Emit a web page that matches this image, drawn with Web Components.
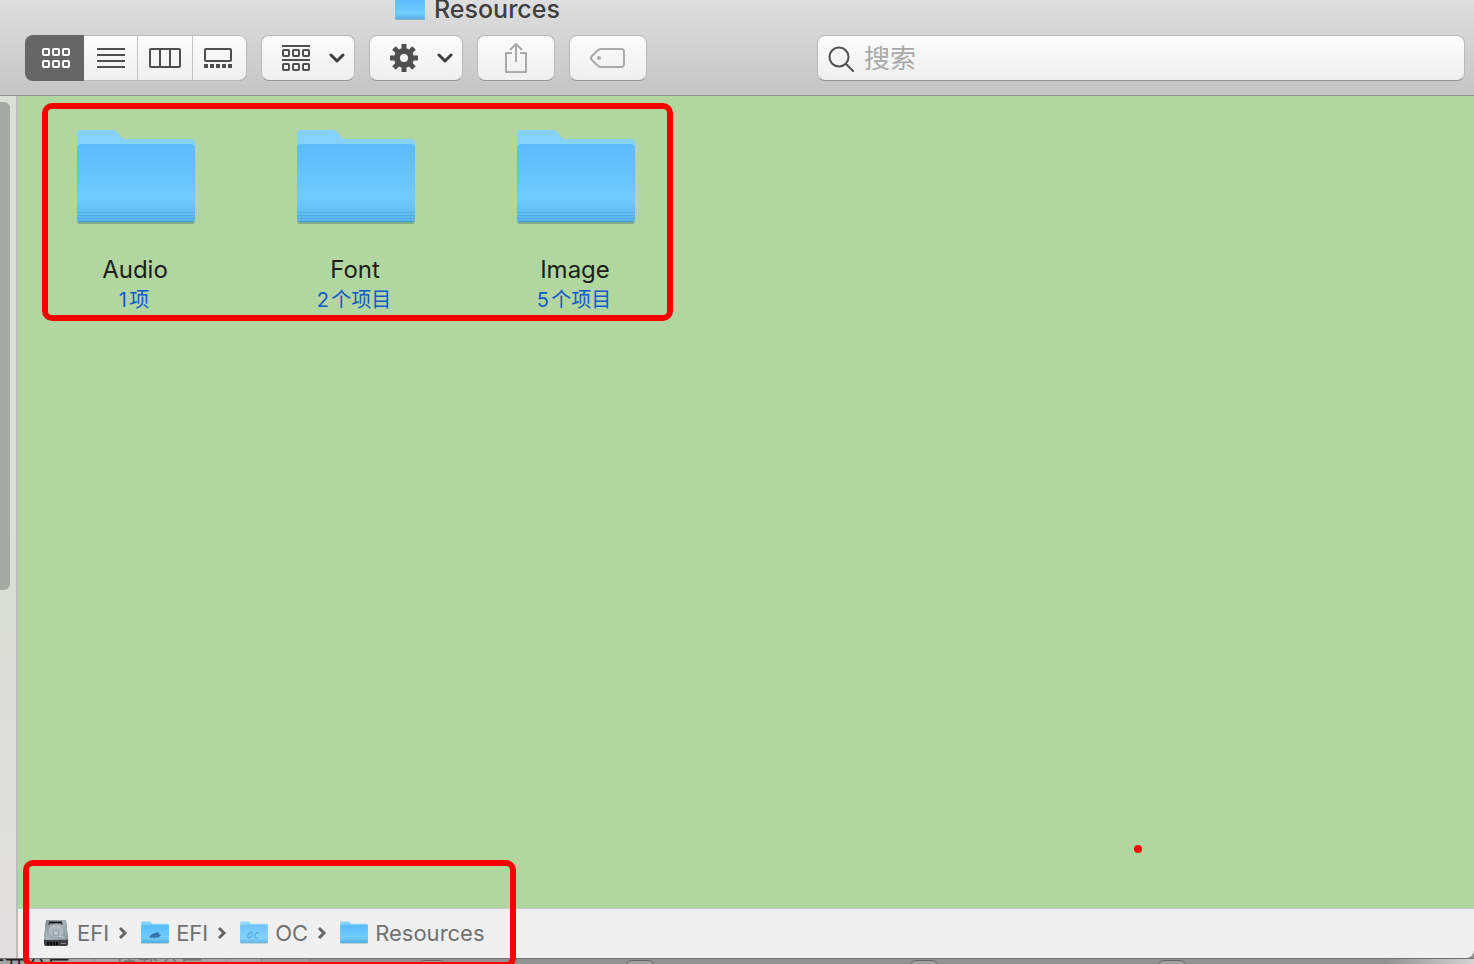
<!DOCTYPE html>
<html lang="zh-CN">
<head>
<meta charset="utf-8">
<title>Resources</title>
<style>
  html, body { margin: 0; height: 100%; overflow: hidden; }
  body { font-family: Inter, "Noto Sans CJK SC", sans-serif; }
</style>
</head>
<body>
<finder-desktop></finder-desktop>
<script>
const define = (name, html, connected) => {
  const template = document.createElement('template');
  template.innerHTML = html;
  customElements.define(name, class extends HTMLElement {
    constructor() {
      super();
      this.attachShadow({ mode: 'open' }).append(template.content.cloneNode(true));
    }
    connectedCallback() { if (connected) connected(this); }
  });
};

/* Blue folder; the slot takes an emblem drawn over its front */
define('folder-icon', `
<style>
  :host { display: block; position: relative; width: 120px; height: 96px; flex: none; }
  svg { display: block; width: 100%; height: 100%; overflow: visible; }
  .emblem { position: absolute; inset: 20% 0 0; display: flex; align-items: center; justify-content: center; }
  ::slotted(svg) { width: 14px; height: 10px; }
</style>
<svg viewBox="0 0 120 96" aria-hidden="true">
  <defs>
    <linearGradient id="front" x1="0" y1="0" x2="0" y2="1">
      <stop offset="0" stop-color="#5bbcf9"/><stop offset=".7" stop-color="#70cbff"/>
      <stop offset=".86" stop-color="#63bff2"/><stop offset="1" stop-color="#5bb5ea"/>
    </linearGradient>
  </defs>
  <path d="M1 91V20h118v71q0 3-3 3H4q-3 0-3-3z" fill="#4d8a86" opacity=".5" transform="translate(0 1)"/>
  <path d="M1 90V5q0-4 4-4h31q4 0 6 3l4 5q1 1 3 1h66q4 0 4 5v75z" fill="#85d3fd"/>
  <path d="M1 90V19q0-4 4-4h110q4 0 4 4v71q0 3-3 3H4q-3 0-3-3z" fill="url(#front)"/>
  <path d="M1 83.500h118M1 86.500h118M1 89.500h118" stroke="#4ca5de" opacity=".6"/>
  <path d="M3 92.500h114" stroke="#429ccf"/>
</svg>
<div class="emblem"><slot></slot></div>`);

define('drive-icon', `
<style>:host { display: block; width: 27px; height: 28px; flex: none; } svg { display: block; width: 100%; height: 100%; }</style>
<svg viewBox="0 0 27 28" aria-hidden="true">
  <defs><linearGradient id="metal" x1="0" y1="0" x2="1" y2="1">
    <stop offset="0" stop-color="#7d8a90"/><stop offset=".5" stop-color="#a9b4b8"/><stop offset="1" stop-color="#85949a"/>
  </linearGradient></defs>
  <path d="M4 1h18q1 0 1 1l2 19v4q0 2-2 2H3q-2 0-2-2v-4L3 2q0-1 1-1z" fill="#3a3e40"/>
  <path d="M4 1h18q1 0 1 1l2 17q0 2-2 2H3q-2 0-2-2L3 2q0-1 1-1z" fill="url(#metal)"/>
  <path d="M6 3.500h13" stroke="#17191a" stroke-width="2"/><path d="M6 4v2M19 4v2" stroke="#333"/>
  <ellipse cx="13" cy="12" rx="8" ry="7" fill="#b0bbbf" stroke="#96a3a8"/>
  <circle cx="13" cy="14" r="3" fill="#bcc6c9" stroke="#8c999e"/>
  <path d="M16 17l6 2" stroke="#c6cfd2"/>
  <path d="M4 24.500h12" stroke="#090a0a" stroke-width="3" stroke-dasharray="2 1"/><path d="M18 24.500h5" stroke="#888"/>
</svg>`);

define('tool-button', `
<style>
  :host { display: block; flex: none; height: 46px; }
  button { display: flex; align-items: center; justify-content: center; gap: 18px; width: 100%; height: 100%; padding: 0 0 0 var(--lead, 0);
    border: 1px solid #b9b9b9; border-bottom-color: #989898; border-radius: 8px;
    background: linear-gradient(#fcfcfc, #efefef); color: #4f4f4f; }
  :host([segment]) button { border-width: 0; border-radius: 0; background: none; }
  :host([pressed]) button { background: #666; color: #fff; }
  :host([disabled]) button { color: #aaa; }
</style>
<button type="button"><slot></slot></button>`, host => {
  const button = host.shadowRoot.querySelector('button');
  button.setAttribute('aria-label', host.getAttribute('label') || '');
  button.disabled = host.hasAttribute('disabled');
  if (host.hasAttribute('segment')) button.setAttribute('aria-pressed', String(host.hasAttribute('pressed')));
});

define('view-switch', `
<style>
  :host { display: flex; box-sizing: border-box; width: 222px; height: 46px; flex: none; overflow: hidden; border-radius: 8px;
    background: linear-gradient(#fcfcfc, #efefef); box-shadow: inset 0 0 0 1px #b9b9b9, inset 0 -1px 0 #989898; }
  tool-button { flex: 1; box-shadow: inset -1px 0 #c4c4c4; }
  tool-button[pressed] { flex: none; width: 59px; --lead: 3px; box-shadow: none; }
  tool-button:last-of-type { box-shadow: none; }
  svg { display: block; fill: none; stroke: currentColor; stroke-width: 2; }
</style>
<tool-button segment pressed label="图标"><svg width="32" height="28"><rect x="3" y="5" width="6" height="6" rx="1"/><rect x="13" y="5" width="6" height="6" rx="1"/><rect x="23" y="5" width="6" height="6" rx="1"/><rect x="3" y="17" width="6" height="6" rx="1"/><rect x="13" y="17" width="6" height="6" rx="1"/><rect x="23" y="17" width="6" height="6" rx="1"/></svg></tool-button>
<tool-button segment label="列表"><svg width="28" height="28"><path d="M0 5h28M0 11h28M0 17h28M0 23h28"/></svg></tool-button>
<tool-button segment label="分栏"><svg width="32" height="28"><rect x="1" y="5" width="30" height="18" rx="1"/><path d="M11 5v18M21 5v18"/></svg></tool-button>
<tool-button segment label="画廊"><svg width="32" height="28"><rect x="1" y="5" width="26" height="12" rx="1"/><path d="M0 22h28" stroke-width="4" stroke-dasharray="4 2"/></svg></tool-button>`);

define('search-field', `
<style>
  :host { display: flex; align-items: center; box-sizing: border-box; height: 46px; padding: 2px 10px 0; gap: 10px;
    border: 1px solid #b9b9b9; border-bottom-color: #929292; border-radius: 8px; background: linear-gradient(#fcfcfc, #efefef); }
  label, svg { display: block; flex: none; }
  input { flex: 1; min-width: 0; height: 40px; padding: 0; border: 0; outline: 0; background: none; color: #444;
    font: 26px/40px Inter, "Noto Sans CJK SC", sans-serif; }
  input::placeholder { color: #a9a9a9; opacity: 1; }
</style>
<label for="q" aria-label="搜索"><svg width="26" height="26" fill="none" stroke="#4f4f4f" stroke-width="2" stroke-linecap="round"><circle cx="11" cy="11" r="9.500"/><path d="M18 18l7 7"/></svg></label>
<input id="q" type="search" placeholder="搜索">`);

define('finder-toolbar', `
<style>
  :host { display: block; flex: none; height: 95px; border-bottom: 1px solid #929292; background: linear-gradient(#dedede, #c5c5c5); }
  .title { display: flex; align-items: flex-start; gap: 9px; height: 20px; margin-bottom: 15px; padding-left: 395px; }
  .title folder-icon { width: 30px; height: 24px; align-self: flex-end; }
  h1 { margin: 0; font-size: 25px; font-weight: 500; line-height: 18px; color: #3f3f3f; }
  .tools { display: flex; gap: 14px; padding: 0 9px 0 25px; }
  .menu { width: 94px; --lead: 9px; }
  .single { width: 78px; }
  search-field { flex: 1; margin-left: 156px; }
  svg { display: block; fill: none; stroke: currentColor; stroke-width: 2; }
  .chevron { stroke: #3f3f3f; stroke-width: 3; stroke-linecap: round; stroke-linejoin: round; }
</style>
<div class="title"><folder-icon></folder-icon><h1>Resources</h1></div>
<div class="tools">
  <view-switch></view-switch>
  <tool-button class="menu" label="排列方式">
    <svg width="30" height="28"><path d="M1 2h28M1 16h28"/><rect x="2" y="6" width="6" height="6" rx="1"/><rect x="12" y="6" width="6" height="6" rx="1"/><rect x="22" y="6" width="6" height="6" rx="1"/><rect x="2" y="20" width="6" height="6" rx="1"/><rect x="12" y="20" width="6" height="6" rx="1"/><rect x="22" y="20" width="6" height="6" rx="1"/></svg>
    <svg class="chevron" width="16" height="10"><path d="M2 2l6 6 6-6"/></svg>
  </tool-button>
  <tool-button class="menu" label="操作">
    <svg width="30" height="30" viewBox="-15 -15 30 30"><circle r="7" stroke-width="6"/><path stroke-width="5" d="M0-8.500V-14M0 8.500V14M-8.500 0H-14M8.500 0H14M6-6l4-4M-6 6l-4 4M6 6l4 4M-6-6l-4-4"/></svg>
    <svg class="chevron" width="16" height="10"><path d="M2 2l6 6 6-6"/></svg>
  </tool-button>
  <tool-button class="single" label="共享" disabled><svg width="24" height="32"><path d="M8 11H2v19h20V11h-6M12 20V3M6 8l6-6 6 6" stroke-linejoin="round"/></svg></tool-button>
  <tool-button class="single" label="标签" disabled><svg width="36" height="22"><path d="M11 2h20q3 0 3 3v12q0 3-3 3H11q-2 0-4-2l-5-5q-2-2 0-4l5-5q2-2 4-2z"/><circle cx="9" cy="11" r="2" fill="currentColor" stroke="none"/></svg></tool-button>
  <search-field></search-field>
</div>`);

define('folder-item', `
<style>
  :host { display: flex; flex-direction: column; align-items: center; width: 220px; text-align: center; }
  folder-icon { margin: 0 0 29px 2px; }
  .name { font-size: 24px; line-height: 32px; color: #1a2118; }
  .count { padding-right: 2px; font-size: 20px; line-height: 28px; color: #1458cf; text-autospace: normal; }
</style>
<folder-icon></folder-icon><span class="name"><slot></slot></span><span class="count"><slot name="count"></slot></span>`);

define('folder-grid', `
<style>
  :host { display: block; position: relative; flex: 1; min-height: 0; padding: 33px 7px; background: #b2d69f; overflow: hidden; }
  .items { display: flex; flex-wrap: wrap; }
  .mark { position: absolute; left: 24px; top: 7px; box-sizing: border-box; width: 631px; height: 218px; border: 6px solid #f80000; border-radius: 10px; }
  .dot { position: absolute; right: 332px; bottom: 55px; width: 8px; height: 8px; border-radius: 50%; background: #f80000; }
</style>
<div class="items">
  <folder-item>Audio<span slot="count">1项</span></folder-item>
  <folder-item>Font<span slot="count">2个项目</span></folder-item>
  <folder-item>Image<span slot="count">5个项目</span></folder-item>
</div>
<div class="mark"></div><div class="dot"></div>`);

define('path-crumb', `
<style>
  :host { display: flex; align-items: center; }
  a { display: flex; align-items: center; gap: 7px; color: #717171; text-decoration: none; font-size: 22px; line-height: 28px; }
  svg { display: block; margin: 0 13px 0 9px; }
  :host([last]) svg { display: none; }
</style>
<a href="#"><slot name="icon"></slot><slot></slot></a>
<svg width="10" height="14" fill="none" stroke="#666" stroke-width="3"><path d="M2 2l5 5-5 5"/></svg>`);

define('path-bar', `
<style>
  :host { display: block; flex: none; border-top: 1px solid #c6c9c6; background: #f0f0f0; border-bottom-right-radius: 8px; }
  nav { display: flex; align-items: center; height: 47px; padding: 0 0 2px 25px; }
  folder-icon { width: 28px; height: 23px; }
  .ghost { opacity: .85; }
</style>
<nav aria-label="路径">
  <path-crumb><drive-icon slot="icon"></drive-icon>EFI</path-crumb>
  <path-crumb><folder-icon slot="icon"><svg viewBox="0 0 14 10"><path d="M1 7l3-3 3-1 3-1 1 2 2 1-3 3-2-1-2 2-1-2-2 1z" fill="#3473ab"/></svg></folder-icon>EFI</path-crumb>
  <path-crumb><folder-icon class="ghost" slot="icon"><svg viewBox="0 0 14 10" fill="none" stroke="#3296d2"><path d="M4 2q2 0 1 3t-3 3-1-3 3-3zM12 3q-3-2-4 2t3 3"/></svg></folder-icon>OC</path-crumb>
  <path-crumb last><folder-icon slot="icon"></folder-icon>Resources</path-crumb>
</nav>`);

define('side-rail', `
<style>
  :host { display: flex; flex-direction: column; flex: none; width: 16px; padding-top: 6px; border-right: 2px solid #bcbcba; background: linear-gradient(#dcded8, #dbddd7 60%, #e1dfdf); }
  .thumb { flex: 488; width: 10px; border-radius: 0 6px 6px 0; background: #a7a9a4; }
  .rest { flex: 368; }
</style>
<div class="thumb"></div><div class="rest"></div>`);

/* Top edge of the window that lies behind the Finder window */
define('back-window', `
<style>
  :host { display: flex; flex: none; height: 6px; overflow: hidden; box-sizing: border-box; border-top: 1px solid #707070;
    background: linear-gradient(90deg, #929292 94%, #d4d4d4); }
  .actions { display: flex; flex: none; width: 261px; background: #a4a4a4; font-size: 22px; line-height: 18px; white-space: nowrap; }
  .actions span { flex: none; box-sizing: border-box; height: 22px; border-right: 1px solid #8c8c8c; }
  .open { width: 95px; color: #222; text-indent: -18px; }
  .mount { width: 132px; color: #777; padding-left: 20px; }
  .side { flex: none; width: 47px; border: solid #7c7c7c; border-width: 0 1px; background: #9b9b9b; }
  .tabs { flex: 1; display: grid; grid-template-columns: 208fr 284fr 248fr 316fr; padding-left: 108px; }
  .tabs i { box-sizing: border-box; width: 28px; height: 12px; margin-top: 1px; border: 1px solid #666; border-radius: 6px; background: #a3a3a3; }
</style>
<div class="actions"><span class="open">打开分区</span><span class="mount">挂载分区</span></div>
<div class="side"></div>
<div class="tabs"><i></i><i></i><i></i><i></i></div>`);

define('finder-desktop', `
<style>
  :host { display: flex; flex-direction: column; position: relative; height: 100vh; overflow: hidden; background: #929292; }
  main { flex: 1; min-height: 0; display: flex; }
  section { flex: 1; min-width: 0; display: flex; flex-direction: column; }
  .mark { position: absolute; left: 23px; bottom: -4px; box-sizing: border-box; width: 493px; height: 108px; border: 6px solid #f80000; border-radius: 10px; }
</style>
<finder-toolbar></finder-toolbar>
<main><side-rail></side-rail><section><folder-grid></folder-grid><path-bar></path-bar></section></main>
<back-window></back-window>
<div class="mark"></div>`);
</script>
</body>
</html>
